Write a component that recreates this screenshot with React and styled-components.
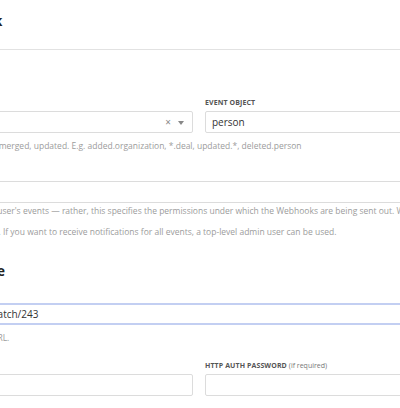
import React from 'react';
import styled, { createGlobalStyle } from 'styled-components';

const GlobalStyle = createGlobalStyle`
  * { box-sizing: border-box; }
  html, body { margin: 0; padding: 0; background: #fff; }
  body { font-family: 'Open Sans', 'Liberation Sans', sans-serif; color: #222; }
`;

// the screenshot is a crop of a wider form, so the form starts left of the viewport
const Page = styled.div`
  width: 400px;
  height: 408px;
  overflow: hidden;
  background: #fff;
`;

const Form = styled.form`
  width: 838px;
  margin-left: -220px;
`;

const Header = styled.header`
  padding: 11px 0 18px;
  border-bottom: 1px solid #e2e2e2;
`;

const Title = styled.h2`
  margin: 0 0 ${(p) => p.$bottom || 0}px;
  font-size: 13.5px;
  line-height: 20px;
  font-weight: 700;
  color: #222;
`;

const Section = styled.section`
  padding-top: ${(p) => p.$top || 0}px;
`;

const Row = styled.div`
  display: grid;
  grid-template-columns: ${(p) => (p.$cols === 2 ? '413px 413px' : '1fr')};
  column-gap: 12px;
  margin-top: ${(p) => p.$top || 0}px;
`;

const Field = styled.div`
  display: flex;
  flex-direction: column;
`;

const Label = styled.label`
  font-size: 7px;
  line-height: 10px;
  font-weight: 700;
  letter-spacing: 0.1px;
  text-transform: uppercase;
  color: #555;
  margin-bottom: 3px;
  span {
    text-transform: none;
    font-weight: 400;
    letter-spacing: 0;
    color: #777;
  }
`;

const Input = styled.input`
  height: 22px;
  width: 100%;
  padding: 0 6px;
  font-family: inherit;
  font-size: 10px;
  color: #333;
  background: #fff;
  border: 1px solid ${(p) => (p.$focus ? '#c3cff2' : '#dcdcdc')};
  border-width: ${(p) => (p.$focus ? '2px 1px' : '1px')};
  border-radius: 2px;
  outline: none;
`;

const Select = styled.div`
  height: 22px;
  display: flex;
  align-items: center;
  justify-content: flex-end;
  gap: 7px;
  padding: 0 8px;
  border: 1px solid #dcdcdc;
  border-radius: 2px;
  font-size: 10px;
  color: #333;
`;

const Clear = styled.span`
  font-size: 10px;
  color: #888;
  line-height: 1;
`;

const Caret = styled.span`
  width: 0;
  height: 0;
  border-left: 3.5px solid transparent;
  border-right: 3.5px solid transparent;
  border-top: 4px solid #888;
  margin-top: 1px;
`;

const Help = styled.p`
  margin: ${(p) => p.$top ?? 7}px 0 0;
  font-size: 8.5px;
  line-height: 12px;
  color: #9c9c9c;
  white-space: nowrap;
`;

export default function App() {
  return (
    <Page>
      <GlobalStyle />
      <Form>
        <Header>
          <Title>Create a new Pipedrive Webhook</Title>
        </Header>

        <Section $top={48}>
          <Row $cols={2}>
            <Field>
              <Label>Event action</Label>
              <Select>
                <Clear>×</Clear>
                <Caret />
              </Select>
            </Field>
            <Field>
              <Label>Event object</Label>
              <Input defaultValue="person" readOnly />
            </Field>
          </Row>
          <Help>
            Action of the object. Possible values: *, added, deleted, merged, updated. E.g. added.organization, *.deal, updated.*, deleted.person
          </Help>

          <Row $top={16}>
            <Field>
              <Label>User</Label>
              <Input readOnly />
            </Field>
          </Row>
          <Help $top={2}>
            Please note that this field does not filter only a specific user's events — rather, this specifies the permissions under which the Webhooks are being sent out. Webhooks are only triggered for
          </Help>
          <Help $top={9}>
            events and records that the selected user has access to. If you want to receive notifications for all events, a top-level admin user can be used.
          </Help>
        </Section>

        <Section $top={23}>
          <Title $bottom={9}>Webhook endpoint URL to invoke</Title>
          <Row>
            <Field>
              <Label>Endpoint URL</Label>
              <Input $focus defaultValue="https://webhook.example.com/dev/stream/watch/243" readOnly />
            </Field>
          </Row>
          <Help>Webhooks will be sent to this endpoint. Enter the full URL.</Help>

          <Row $cols={2} $top={17}>
            <Field>
              <Label>
                HTTP Auth username <span>(if required)</span>
              </Label>
              <Input readOnly />
            </Field>
            <Field>
              <Label>
                HTTP Auth password <span>(if required)</span>
              </Label>
              <Input readOnly />
            </Field>
          </Row>
        </Section>
      </Form>
    </Page>
  );
}
